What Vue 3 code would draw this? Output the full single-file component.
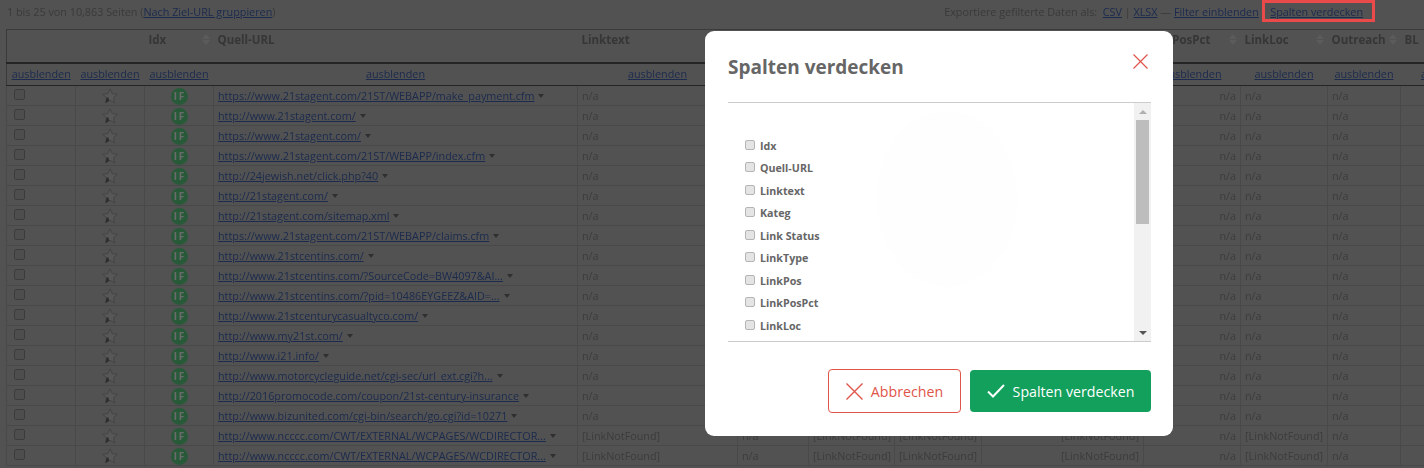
<script setup>
import { ref } from 'vue';

// column widths + header labels, the last few sit mostly behind the modal
const columns = [
  { label: '', width: 69 },
  { label: '', width: 69 },
  { label: 'Idx', width: 69, sort: true },
  { label: 'Quell-URL', width: 364 },
  { label: 'Linktext', width: 160, sort: true },
  { label: 'Kateg', width: 71, sort: true },
  { label: 'Link Status', width: 86, sort: true },
  { label: 'LinkType', width: 87, sort: true },
  { label: 'LinkPos', width: 162, sort: true },
  { label: 'LinkPosPct', width: 97, sort: true },
  { label: 'LinkLoc', width: 87, sort: true },
  { label: 'Outreach', width: 73, sort: true },
  { label: 'BL', width: 100, sort: true },
];

const urls = [
  'https://www.21stagent.com/21ST/WEBAPP/make_payment.cfm',
  'http://www.21stagent.com/',
  'https://www.21stagent.com/',
  'https://www.21stagent.com/21ST/WEBAPP/index.cfm',
  'http://24jewish.net/click.php?40',
  'http://21stagent.com/',
  'http://21stagent.com/sitemap.xml',
  'https://www.21stagent.com/21ST/WEBAPP/claims.cfm',
  'http://www.21stcentins.com/',
  'http://www.21stcentins.com/?SourceCode=BW4097&AI...',
  'http://www.21stcentins.com/?pid=10486EYGEEZ&AID=...',
  'http://www.21stcenturycasualtyco.com/',
  'http://www.my21st.com/',
  'http://www.i21.info/',
  'http://www.motorcycleguide.net/cgi-sec/url_ext.cgi?h...',
  'http://2016promocode.com/coupon/21st-century-insurance',
  'http://www.bizunited.com/cgi-bin/search/go.cgi?id=10271',
  'http://www.ncccc.com/CWT/EXTERNAL/WCPAGES/WCDIRECTOR...',
  'http://www.ncccc.com/CWT/EXTERNAL/WCPAGES/WCDIRECTOR...',
];

const hiddenOptions = ref([
  { name: 'Idx', checked: false },
  { name: 'Quell-URL', checked: false },
  { name: 'Linktext', checked: false },
  { name: 'Kateg', checked: false },
  { name: 'Link Status', checked: false },
  { name: 'LinkType', checked: false },
  { name: 'LinkPos', checked: false },
  { name: 'LinkPosPct', checked: false },
  { name: 'LinkLoc', checked: false },
]);

const missing = '[LinkNotFound]';
const isMissing = (i) => i >= 17;
</script>

<template>
  <div class="page">
    <div class="content">
      <div class="topbar">
        <div>1 bis 25 von 10,863 Seiten (<a>Nach Ziel-URL gruppieren</a>)</div>
        <div class="export">
          Exportiere gefilterte Daten als:&nbsp; <a>CSV</a> | <a>XLSX</a> — <a>Filter einblenden</a> | <a>Spalten verdecken</a>
        </div>
      </div>

      <table class="grid">
        <colgroup>
          <col v-for="(c, i) in columns" :key="i" :style="{ width: c.width + 'px' }" />
        </colgroup>
        <thead>
          <tr class="head">
            <th v-for="(c, i) in columns" :key="i">
              <div class="th-inner">
                <span>{{ c.label }}</span>
                <span v-if="c.sort" class="sort"><i class="up"></i><i class="down"></i></span>
              </div>
            </th>
          </tr>
          <tr class="hide-row">
            <td v-for="(c, i) in columns" :key="i"><a>ausblenden</a></td>
          </tr>
        </thead>
        <tbody>
          <tr v-for="(url, i) in urls" :key="i">
            <td class="check"><span class="box"></span></td>
            <td class="center">
              <svg class="star" width="16" height="16" viewBox="0 0 16 16">
                <path d="M8 .8l2.200 4.800 5.200.6-3.900 3.500 1.100 5.300L8 12.300 3.400 15l1.100-5.300L.6 6.200l5.200-.6z" fill="#d0d0d0" stroke="#a0a0a0" />
                <path d="M4.700 9.400L3.500 14.900 7 12.900l-.4-3.500z" fill="#6c6c6c" />
              </svg>
            </td>
            <td class="center"><span class="badge">I F</span></td>
            <td><a>{{ url }}</a><span class="caret"></span></td>
            <td>{{ isMissing(i) ? missing : 'n/a' }}</td>
            <td>n/a</td>
            <td>{{ isMissing(i) ? missing : 'n/a' }}</td>
            <td>{{ isMissing(i) ? missing : 'n/a' }}</td>
            <td class="right">{{ isMissing(i) ? missing : 'n/a' }}</td>
            <td class="right">n/a</td>
            <td>{{ isMissing(i) ? missing : 'n/a' }}</td>
            <td>n/a</td>
            <td></td>
          </tr>
        </tbody>
      </table>
    </div>

    <div class="overlay"></div>
    <div class="highlight"></div>

    <div class="modal">
      <div class="modal-head">
        <h2>Spalten verdecken</h2>
        <svg class="close" width="15" height="15" viewBox="0 0 15 15">
          <path d="M.5.500l14 14M14.500.500l-14 14" stroke="#e0554a" stroke-width="1.200" fill="none" />
        </svg>
      </div>

      <div class="list-wrap">
        <div class="list">
          <label v-for="o in hiddenOptions" :key="o.name" class="option">
            <input v-model="o.checked" type="checkbox" />
            <span>{{ o.name }}</span>
          </label>
        </div>
        <div class="scroll">
          <i class="scroll-up"></i>
          <div class="thumb"></div>
          <i class="scroll-down"></i>
        </div>
      </div>

      <div class="actions">
        <button class="cancel">
          <svg width="17" height="17" viewBox="0 0 17 17">
            <path d="M.5.500l16 16M16.500.500l-16 16" stroke="#e0554a" stroke-width="1.400" fill="none" />
          </svg>
          Abbrechen
        </button>
        <button class="save">
          <svg width="18" height="14" viewBox="0 0 18 14">
            <path d="M1 7.500l5 5L17 1" stroke="#fff" stroke-width="2" fill="none" />
          </svg>
          Spalten verdecken
        </button>
      </div>
    </div>
  </div>
</template>

<style>
body {
  margin: 0;
  overflow: hidden;
}
</style>

<style scoped>
.page {
  position: relative;
  width: 1424px;
  height: 468px;
  overflow: hidden;
  background: #c3c3c3;
  font-family: "Open Sans", sans-serif;
  font-size: 10.800px;
  color: #8a8a8a;
}

.content {
  filter: blur(0.4px);
}

a {
  color: #4468b8;
  text-decoration: underline;
}

.topbar {
  display: flex;
  justify-content: space-between;
  height: 29px;
  box-sizing: border-box;
  padding: 3px 61px 0 7px;
  line-height: 17px;
}

.grid {
  table-layout: fixed;
  border-collapse: collapse;
  width: 1494px;
  margin-left: 6px;
  border-left: 1px solid #8a8a8a;
  border-top: 1px solid #8a8a8a;
}

th,
td {
  padding: 0 4px;
  white-space: nowrap;
  overflow: hidden;
  box-sizing: border-box;
}

.head th {
  height: 33px;
  vertical-align: top;
  text-align: left;
  font-size: 11.500px;
  color: #808080;
  font-weight: 700;
  border-bottom: 2px solid #5a5a5a;
}

.th-inner {
  display: flex;
  justify-content: space-between;
  padding-top: 1px;
  line-height: 18px;
}

.sort {
  display: flex;
  flex-direction: column;
  gap: 1px;
  padding-top: 3px;
}

.sort i {
  width: 0;
  height: 0;
  border-left: 4px solid transparent;
  border-right: 4px solid transparent;
}

.sort .up {
  border-bottom: 5px solid #d8d8d8;
}

.sort .down {
  border-top: 5px solid #d8d8d8;
}

.hide-row td {
  height: 23px;
  padding-bottom: 2px;
  text-align: center;
  border-bottom: 1px solid #5a5a5a;
}

tbody td {
  height: 20px;
  line-height: 19px;
  border-bottom: 1px solid #aeaeae;
  border-left: 1px solid #aeaeae;
  color: #8f8f8f;
}

.center,
.check {
  padding: 0;
  text-align: center;
}

.check {
  text-align: left;
  padding-left: 7px;
}

.box {
  display: block;
  width: 9px;
  height: 9px;
  margin-top: -3px;
  border: 1px solid #909090;
  border-radius: 2px;
  background: #bbb;
}

.star {
  display: block;
  margin: 0 auto;
}

.badge {
  display: block;
  width: 17px;
  height: 17px;
  margin: 1px auto 0;
  border-radius: 50%;
  background: #60d688;
  color: #fff;
  font-size: 10px;
  font-weight: 700;
  line-height: 17px;
  text-align: center;
  word-spacing: -1px;
}

.caret {
  display: inline-block;
  margin-left: 4px;
  vertical-align: 2px;
  border-left: 3.500px solid transparent;
  border-right: 3.500px solid transparent;
  border-top: 4px solid #707070;
}

.right {
  text-align: right;
}

.overlay {
  position: absolute;
  inset: 0;
  background: rgba(0, 0, 0, 0.58);
}

.highlight {
  position: absolute;
  left: 1262px;
  top: 0;
  width: 113px;
  height: 22px;
  box-sizing: border-box;
  border: 3px solid #ea4a4a;
}

.modal {
  position: absolute;
  left: 705px;
  top: 31px;
  width: 468px;
  height: 405px;
  box-sizing: border-box;
  padding: 0 22px 0 23px;
  background: #fff;
  border-radius: 9px;
  color: #666;
}

.modal-head {
  display: flex;
  justify-content: space-between;
  height: 71px;
  border-bottom: 1px solid #ccc;
}

h2 {
  margin: 22px 0 0;
  font-size: 19px;
  line-height: 28px;
  font-weight: 700;
  color: #666;
}

.close {
  margin: 23px 3px 0 0;
}

.list-wrap {
  position: relative;
  display: flex;
  height: 238px;
  border-bottom: 1px solid #ccc;
}

/* faint logo watermark behind the list */
.list-wrap::before {
  content: "";
  position: absolute;
  left: 149px;
  top: 8px;
  width: 140px;
  height: 176px;
  border-radius: 50%;
  background: #fefefe;
}

.list {
  position: relative;
  flex: 1;
  display: flex;
  flex-direction: column;
  gap: 4.500px;
  padding: 33.500px 0 0 17px;
  overflow: hidden;
}

.option {
  display: flex;
  align-items: center;
  gap: 5px;
  height: 18px;
  font-size: 10.700px;
  font-weight: 700;
  color: #666;
}

.option input {
  appearance: none;
  width: 8px;
  height: 8px;
  margin: -2px 0 0;
  box-sizing: content-box;
  border: 1px solid #b5b5b5;
  border-radius: 2px;
  background: #e4e4e4;
}

.scroll {
  position: relative;
  width: 17px;
  background: #f1f1f1;
}

.thumb {
  width: 13px;
  height: 104px;
  margin: 17px 0 0 2px;
  background: #bdbdbd;
}

.scroll-up,
.scroll-down {
  position: absolute;
  left: 5px;
  width: 0;
  height: 0;
  border-left: 4px solid transparent;
  border-right: 4px solid transparent;
}

.scroll-up {
  top: 7px;
  border-bottom: 4px solid #b0b0b0;
}

.scroll-down {
  bottom: 6px;
  border-top: 4px solid #555;
}

.actions {
  display: flex;
  justify-content: flex-end;
  align-items: center;
  gap: 9px;
  margin-top: 27px;
}

button {
  display: flex;
  align-items: center;
  justify-content: center;
  gap: 8px;
  border-radius: 4px;
  font-family: "Open Sans", sans-serif;
  font-size: 14.200px;
  box-sizing: border-box;
  cursor: pointer;
}

.cancel {
  width: 133px;
  height: 44px;
  background: #fff;
  border: 1px solid #e0554a;
  color: #e0554a;
}

.save {
  width: 181px;
  height: 42px;
  background: #12a05c;
  border: none;
  color: #fff;
}
</style>
